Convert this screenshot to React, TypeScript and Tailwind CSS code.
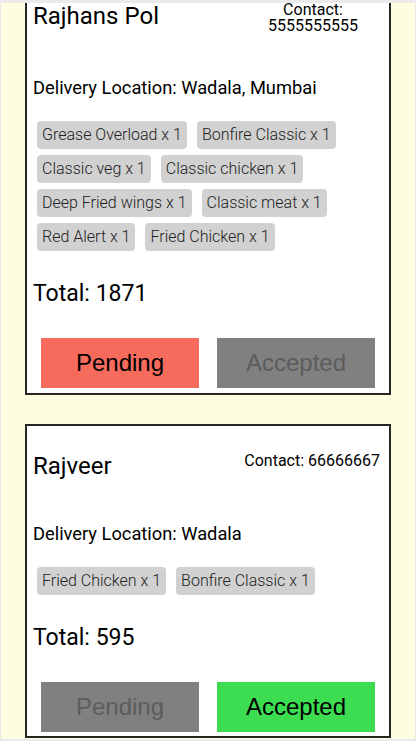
type Order = {
  name: string;
  contact: string;
  location: string;
  items: string[];
  total: number;
  status: "pending" | "accepted";
  narrowContact?: boolean;
};

const orders: Order[] = [
  {
    name: "Rajhans Pol",
    contact: "5555555555",
    location: "Wadala, Mumbai",
    items: [
      "Grease Overload x 1",
      "Bonfire Classic x 1",
      "Classic veg x 1",
      "Classic chicken x 1",
      "Deep Fried wings x 1",
      "Classic meat x 1",
      "Red Alert x 1",
      "Fried Chicken x 1",
    ],
    total: 1871,
    status: "pending",
    narrowContact: true,
  },
  {
    name: "Rajveer",
    contact: "66666667",
    location: "Wadala",
    items: ["Fried Chicken x 1", "Bonfire Classic x 1"],
    total: 595,
    status: "accepted",
  },
];

function OrderCard({ order, first }: { order: Order; first?: boolean }) {
  const pending = order.status === "pending";
  return (
    <div
      className={`mx-[24px] border-2 border-[#262626] bg-white pt-[26px] ${
        first ? "mt-[-29px] pb-[5px]" : "mt-[29px] pb-[4px]"
      }`}
    >
      <div className="flex items-start justify-between pl-[6px] pr-[9px]">
        <h2 className="text-[24px] leading-[28px] text-black">{order.name}</h2>
        {order.narrowContact ? (
          <div className="mr-[17px] w-[100px] text-center text-[16px] leading-[16px] text-black">
            <div>Contact:</div>
            <div>{order.contact}</div>
          </div>
        ) : (
          <div className="text-[16px] leading-[18px] text-black">
            Contact: {order.contact}
          </div>
        )}
      </div>
      <h3 className="mt-[43px] pl-[6px] text-[18.3px] leading-[22px] text-black">
        Delivery Location: {order.location}
      </h3>
      <div className="mt-[22px] ml-[10px] mr-[10px] flex flex-wrap gap-x-[10px] gap-y-[6px]">
        {order.items.map((item, index: number) => (
          <div
            key={index}
            className="flex h-[28px] items-center rounded-[4px] bg-[#d1d1d1] px-[5px] text-[16px] font-light text-[#222]"
          >
            {item}
          </div>
        ))}
      </div>
      <h2 className="mt-[29px] pl-[6px] text-[23px] leading-[28px] text-black">
        Total: {order.total}
      </h2>
      <div className="mt-[30px] flex justify-between px-[14px]">
        <button
          className={`h-[50px] w-[158px] text-[24px] ${
            pending ? "bg-[#f76b5d] text-black" : "bg-[#808080] text-[#5c5c5c]"
          }`}
          style={{ fontFamily: '"Liberation Sans", Arial, sans-serif' }}
        >
          Pending
        </button>
        <button
          className={`h-[50px] w-[158px] text-[24px] ${
            pending ? "bg-[#808080] text-[#5c5c5c]" : "bg-[#3ddd51] text-black"
          }`}
          style={{ fontFamily: '"Liberation Sans", Arial, sans-serif' }}
        >
          Accepted
        </button>
      </div>
    </div>
  );
}

export default function App() {
  return (
    <div
      className="h-[741px] w-[416px] overflow-hidden border-x border-t-[3px] border-b-2 border-[#ebebeb] bg-[#fffde0]"
      style={{ fontFamily: "Roboto, 'Noto Sans', sans-serif" }}
    >
      <div className="flex flex-col">
        {orders.map((order, index: number) => (
          <OrderCard key={index} order={order} first={index === 0} />
        ))}
      </div>
    </div>
  );
}
